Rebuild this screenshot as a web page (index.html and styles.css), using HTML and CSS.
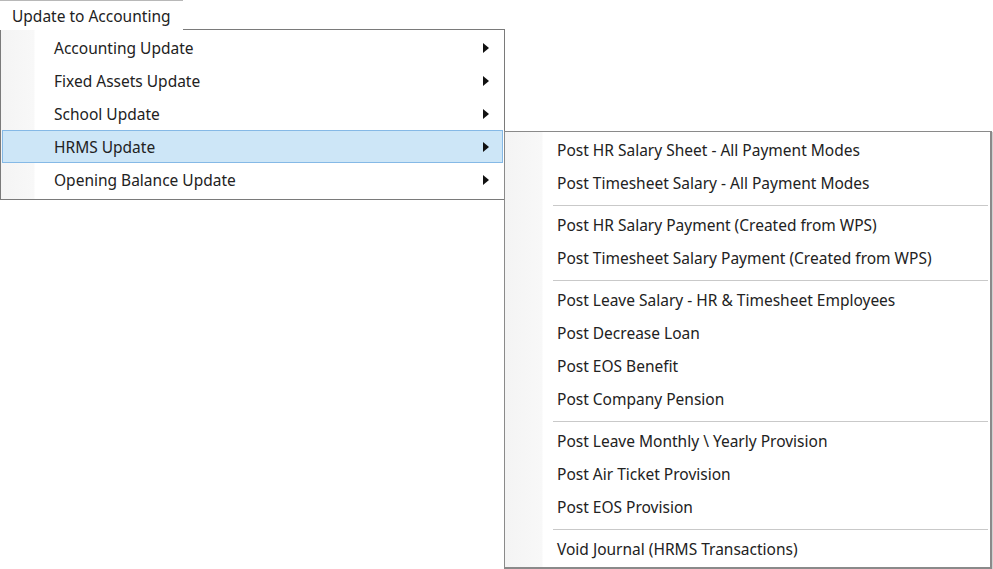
FILE: index.html
```html
<!DOCTYPE html>
<html>
<head>
<meta charset="utf-8">
<link rel="stylesheet" href="styles.css">
</head>
<body>
<div class="stage">
  <div class="topbar">
    <div class="tab">Update to Accounting</div>
    <div class="tab-fill"></div>
  </div>
  <div class="menu main">
    <div class="item"><span class="label">Accounting Update</span><span class="arrow"></span></div>
    <div class="item"><span class="label">Fixed Assets Update</span><span class="arrow"></span></div>
    <div class="item"><span class="label">School Update</span><span class="arrow"></span></div>
    <div class="item active"><span class="label">HRMS Update</span><span class="arrow"></span></div>
    <div class="item"><span class="label">Opening Balance Update</span><span class="arrow"></span></div>
  </div>
  <div class="menu sub">
    <div class="item"><span class="label">Post HR Salary Sheet - All Payment Modes</span></div>
    <div class="item"><span class="label">Post Timesheet Salary - All Payment Modes</span></div>
    <div class="sep"></div>
    <div class="item"><span class="label">Post HR Salary Payment (Created from WPS)</span></div>
    <div class="item"><span class="label">Post Timesheet Salary Payment (Created from WPS)</span></div>
    <div class="sep"></div>
    <div class="item"><span class="label">Post Leave Salary - HR &amp; Timesheet Employees</span></div>
    <div class="item"><span class="label">Post Decrease Loan</span></div>
    <div class="item"><span class="label">Post EOS Benefit</span></div>
    <div class="item"><span class="label">Post Company Pension</span></div>
    <div class="sep"></div>
    <div class="item"><span class="label">Post Leave Monthly \ Yearly Provision</span></div>
    <div class="item"><span class="label">Post Air Ticket Provision</span></div>
    <div class="item"><span class="label">Post EOS Provision</span></div>
    <div class="sep"></div>
    <div class="item"><span class="label">Void Journal (HRMS Transactions)</span></div>
  </div>
</div>
</body>
</html>
```
FILE: styles.css
```css
html, body {
  margin: 0;
  padding: 0;
  background: #ffffff;
}
body {
  font-family: "Noto Sans", "Open Sans", sans-serif;
  font-size: 15.5px;
  color: #222222;
  width: 993px;
  height: 569px;
  overflow: hidden;
}
.stage {
  position: relative;
  width: 993px;
  height: 569px;
}
.topbar {
  display: flex;
  height: 30px;
}
.tab {
  width: 183px;
  box-sizing: border-box;
  border-top: 1px solid #b8b8b8;
  padding: 5px 0 0 12px;
  line-height: 20px;
  background: #ffffff;
}
.tab-fill {
  width: 322px;
  box-sizing: border-box;
  border-bottom: 1px solid #7a7a7a;
}
.menu {
  box-sizing: border-box;
  background: #ffffff;
  border: 1px solid #7a7a7a;
  padding: 1px 1px 2px;
}
.main {
  width: 505px;
  border-top: none;
  background: linear-gradient(to right, #f4f4f4 0, #f8f8f8 33px, #ffffff 34px);
  height: 170px;
}
.sub {
  position: absolute;
  left: 504px;
  top: 131px;
  width: 488px;
  height: 438px;
  border-right-width: 2px;
  border-bottom-width: 2px;
  border-color: #8a8a8a;
  box-shadow: 1px 1px 0 #d0d0d0;
  background: linear-gradient(to right, #f4f4f4 0, #f8f8f8 37px, #ffffff 38px);
}
.item {
  display: flex;
  align-items: center;
  height: 33px;
  box-sizing: border-box;
  border: 1px solid transparent;
}
.main .item {
  padding-left: 51px;
}
.sub .item {
  padding-left: 50px;
}
.item .label {
  flex: 1;
  white-space: nowrap;
}
.item.active {
  background: #cde6f7;
  border-color: #85b9e6;
}
.arrow {
  width: 0;
  height: 0;
  border-top: 5px solid transparent;
  border-bottom: 5px solid transparent;
  border-left: 6px solid #111111;
  margin-right: 13px;
}
.sep {
  height: 9px;
  box-sizing: border-box;
  padding-top: 6px;
  margin-left: 47px;
  margin-right: 1px;
}
.sep::before {
  content: "";
  display: block;
  height: 1px;
  background: #c9c9c9;
}
.sep::after {
  content: "";
  display: block;
  height: 1px;
  background: #ffffff;
}
```
